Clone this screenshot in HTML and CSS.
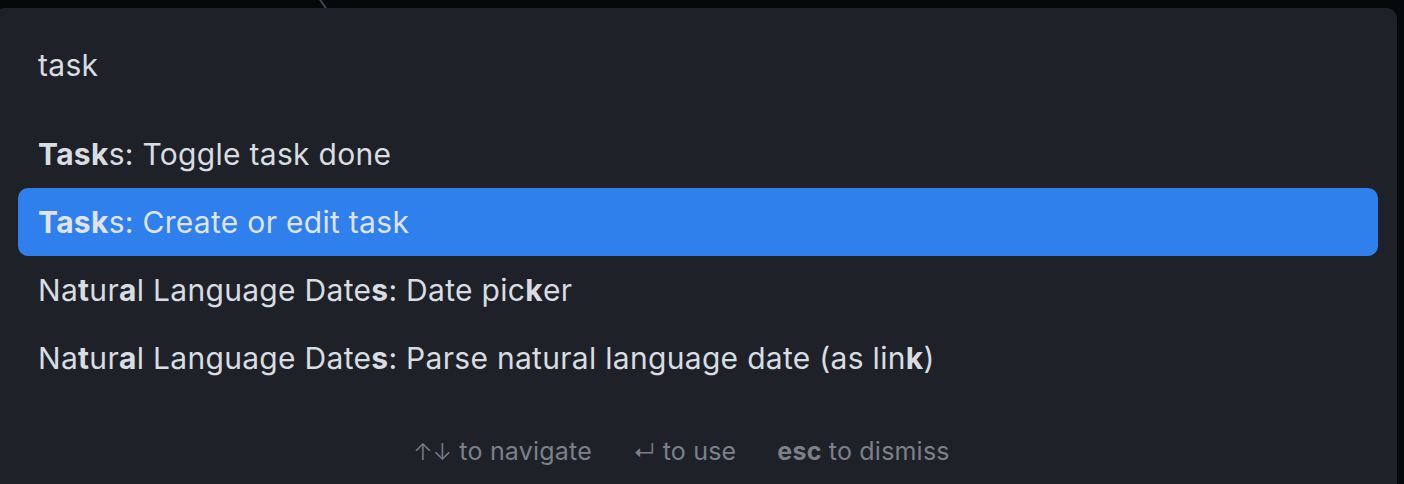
FILE: index.html
```html
<!DOCTYPE html>
<html>
<head>
<meta charset="utf-8">
<link rel="stylesheet" href="styles.css">
</head>
<body>
<div class="topbar"><span class="cursor"></span></div>
<div class="modal">
  <div class="prompt">task</div>
  <div class="list">
    <div class="item"><b>Task</b>s: Toggle task done</div>
    <div class="item selected"><b>Task</b>s: Create or edit task</div>
    <div class="item">Na<b>t</b>ur<b>a</b>l Language Date<b>s</b>: Date pic<b>k</b>er</div>
    <div class="item">Na<b>t</b>ur<b>a</b>l Language Date<b>s</b>: Parse natural language date (as lin<b>k</b>)</div>
  </div>
  <div class="footer">
    <span class="hint"><span class="key">↑↓</span> to navigate</span>
    <span class="hint"><span class="key">↵</span> to use</span>
    <span class="hint"><b>esc</b> to dismiss</span>
  </div>
</div>
</body>
</html>
```
FILE: styles.css
```css
html, body {
  margin: 0;
  padding: 0;
  background: #05090c;
  width: 1404px;
  height: 484px;
  overflow: hidden;
  font-family: Inter, "Noto Sans", sans-serif;
}
.topbar {
  height: 8px;
  position: relative;
}
.cursor {
  position: absolute;
  left: 312px;
  top: 0;
  width: 10px;
  height: 8px;
  border-right: 2px solid #4a4f57;
  transform: skewX(35deg);
}
.modal {
  margin-left: -6px;
  width: 1403px;
  height: 500px;
  background: #1e2228;
  border-radius: 11px;
  box-sizing: border-box;
  padding-left: 6px;
}
.prompt {
  height: 112px;
  box-sizing: border-box;
  padding: 40px 0 0 38px;
  color: #d9dce1;
  font-size: 30px;
  letter-spacing: 0.3px;
  line-height: 34px;
}
.list {
  display: flex;
  flex-direction: column;
  padding: 0 19px 0 18px;
}
.item {
  height: 68px;
  display: flex;
  align-items: center;
  padding-left: 20px;
  color: #d9dce1;
  font-size: 30px;
  letter-spacing: 0.3px;
  border-radius: 10px;
  white-space: pre;
}
.item b { font-weight: 700; }
.item.selected {
  background: #2f80ec;
  color: #dfe3ea;
}
.footer {
  margin-top: 44px;
  display: flex;
  justify-content: center;
  gap: 41px;
  color: #7b8089;
  font-size: 25px;
  letter-spacing: 0.2px;
  margin-left: -34px;
}
.footer b { font-weight: 700; }
.key { font-size: 23px; font-weight: 300; }
```
